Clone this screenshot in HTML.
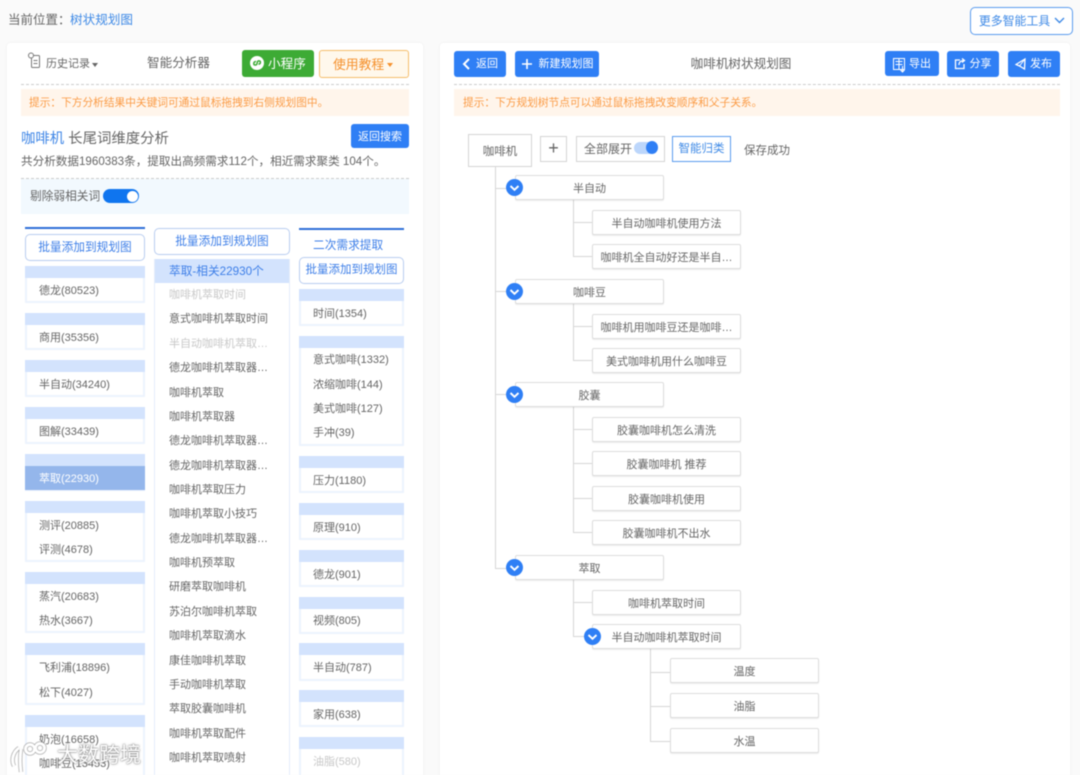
<!DOCTYPE html>
<html lang="zh"><head><meta charset="utf-8"><title>树状规划图</title>
<style>
html,body{margin:0;padding:0}
body{width:1080px;height:775px;overflow:hidden;background:#fafafa;position:relative;font-family:"Liberation Sans","Noto Sans CJK SC",sans-serif;font-size:11px;color:#666}
#w{position:absolute;left:0;top:0;width:1080px;height:775px;overflow:hidden;filter:blur(.4px)}
.a{position:absolute;box-sizing:border-box;white-space:nowrap}
.c{text-align:center}
.panel{background:#fff;border-radius:4px;box-shadow:0 0 4px rgba(0,0,0,.04)}
.dash{height:0;border-top:1px dashed #ccc}
.tip{background:#fff5eb;color:#fb9b45;line-height:29px;height:27px;font-size:10.7px}
.bb{background:#2f7ff5;color:#fff;border-radius:3px;text-align:center}
.ob{background:#fff;border:1px solid #b9cdf0;border-radius:5px;color:#3e7fe8;font-size:11.7px;text-align:center}
.line{background:#2f6fd8;height:2px}
.g{border:2px solid #edf3fd;border-top:0;background:#fff;left:25px;width:120px}
.g3{left:299px;width:105px}
.h{height:12px;background:#d3e3fd}
.i{color:#666;line-height:26px;height:24px}
.d{color:#c8c8c8}
.n{background:#fff;border:1px solid #ddd;border-radius:2px;box-shadow:0 1px 1px rgba(0,0,0,.08);text-align:center;color:#666;height:25px;line-height:26px;width:149px}
.v{background:#d6d6d6;width:1.4px}
.l{background:#d6d6d6;height:1.4px}
.o{width:17px;height:17px;border-radius:50%;background:#2f7ff5}
.o svg{position:absolute;left:0;top:0}
</style></head><body><div id="w">

<div class="a" style="left:8px;top:12px;line-height:17px;font-size:12.500px;color:#666">当前位置：</div>
<div class="a" style="left:70px;top:12px;line-height:17px;font-size:12.600px;color:#3f8ae6">树状规划图</div>
<div class="a c" style="left:970px;top:7px;width:103px;height:28px;line-height:27px;background:#fff;border:1px solid #5b9cee;border-radius:5px;color:#3f8ae6;font-size:11.900px;padding-right:14px">更多智能工具</div>
<svg class="a" style="left:1054px;top:16px" width="11" height="9"><path d="M1 2l4.500 4.500L10 2" fill="none" stroke="#3f8ae6" stroke-width="1.400"/></svg>

<!-- LEFT PANEL -->
<div class="a panel" style="left:7px;top:43px;width:416px;height:740px"></div>
<svg class="a" style="left:27px;top:52px" width="15" height="17" fill="none" stroke="#777"><rect x="4.500" y="3.500" width="8" height="12" rx="1"/><circle cx="4" cy="3.500" r="2.500" fill="#fff"/><path d="M6.500 8.500h4M6.500 11.500h4"/></svg>
<div class="a" style="left:46px;top:56px;line-height:16px">历史记录</div>
<div class="a" style="left:92px;top:63px;border:3.500px solid transparent;border-top:4px solid #666;border-bottom:0"></div>
<div class="a" style="left:147px;top:55px;line-height:17px;font-size:12.600px">智能分析器</div>
<div class="a" style="left:242px;top:50px;width:72px;height:27px;background:#3dab35;border-radius:3px;color:#fff;font-size:12.600px;line-height:28px;padding-left:26px">小程序</div>
<div class="a" style="left:250px;top:56px;width:14px;height:14px;border-radius:50%;background:#fff"></div>
<svg class="a" style="left:250px;top:56px" width="14" height="14" fill="none" stroke="#3dab35" stroke-width="1.500"><path d="M6 5.500a2 2 0 0 0-2.200 2.200c0 1.500 2.700 2 3.200 0L7.400 6c.5-1.800 3-1.300 3 .3 0 1-.7 1.800-1.900 1.900"/></svg>
<div class="a" style="left:319px;top:50px;width:90px;height:28px;background:#fff8ec;border:1px solid #f5bd6b;border-radius:3px;color:#f5912d;font-size:12.800px;line-height:27px;padding-left:13px">使用教程</div>
<div class="a" style="left:387px;top:63px;border:3.500px solid transparent;border-top:4px solid #f5912d;border-bottom:0"></div>
<div class="a dash" style="left:21px;top:84px;width:388px"></div>
<div class="a tip" style="left:21px;top:89px;width:388px;padding-left:8px">提示：下方分析结果中关键词可通过鼠标拖拽到右侧规划图中。</div>
<div class="a" style="left:21px;top:130px;line-height:18px;font-size:14.400px;color:#666"><span style="color:#3f86e6">咖啡机</span> 长尾词维度分析</div>
<div class="a bb" style="left:351px;top:124px;width:58px;height:24px;line-height:26px">返回搜索</div>
<div class="a" style="left:21px;top:152px;line-height:19px;font-size:11.600px;color:#666">共分析数据1960383条，提取出高频需求112个，相近需求聚类 104个。</div>
<div class="a dash" style="left:21px;top:178px;width:388px"></div>
<div class="a" style="left:21px;top:179px;width:388px;height:35px;background:#f2f9fe"></div>
<div class="a" style="left:30px;top:188px;line-height:18px;font-size:11.700px">剔除弱相关词</div>
<div class="a" style="left:103px;top:189px;width:36px;height:14px;border-radius:7px;background:#0f75ef"></div>
<div class="a" style="left:127px;top:191px;width:11px;height:11px;border-radius:50%;background:#fff"></div>

<!-- col 1 -->
<div class="a line" style="left:25px;top:227px;width:120px"></div>
<div class="a ob" style="left:25px;top:234px;width:120px;height:27px;line-height:26px">批量添加到规划图</div>
<div class="a h" style="left:25px;top:266px;width:120px"></div><div class="a g" style="top:278px;height:25px"></div><div class="a i" style="left:39px;top:278px">德龙(80523)</div>
<div class="a h" style="left:25px;top:313px;width:120px"></div><div class="a g" style="top:325px;height:25px"></div><div class="a i" style="left:39px;top:325px">商用(35356)</div>
<div class="a h" style="left:25px;top:360px;width:120px"></div><div class="a g" style="top:372px;height:25px"></div><div class="a i" style="left:39px;top:372px">半自动(34240)</div>
<div class="a h" style="left:25px;top:407px;width:120px"></div><div class="a g" style="top:419px;height:25px"></div><div class="a i" style="left:39px;top:419px">图解(33439)</div>
<div class="a h" style="left:25px;top:454px;width:120px"></div><div class="a" style="left:25px;top:466px;width:120px;height:25px;background:#94b6eb;border-bottom:1px solid #e9f0fd"></div><div class="a i" style="left:39px;top:466px;color:#fff">萃取(22930)</div>
<div class="a h" style="left:25px;top:501px;width:120px"></div><div class="a g" style="top:513px;height:49px"></div><div class="a i" style="left:39px;top:513px">测评(20885)</div><div class="a i" style="left:39px;top:537px">评测(4678)</div>
<div class="a h" style="left:25px;top:572px;width:120px"></div><div class="a g" style="top:584px;height:49px"></div><div class="a i" style="left:39px;top:584px">蒸汽(20683)</div><div class="a i" style="left:39px;top:608px">热水(3667)</div>
<div class="a h" style="left:25px;top:643px;width:120px"></div><div class="a g" style="top:655px;height:50px"></div><div class="a i" style="left:39px;top:655px">飞利浦(18896)</div><div class="a i" style="left:39px;top:680px">松下(4027)</div>
<div class="a h" style="left:25px;top:715px;width:120px"></div><div class="a g" style="top:727px;height:60px"></div><div class="a i" style="left:39px;top:727px">奶泡(16658)</div><div class="a i" style="left:39px;top:751px">咖啡豆(13453)</div>

<!-- col 2 -->
<div class="a ob" style="left:154px;top:228px;width:136px;height:27px;line-height:25px">批量添加到规划图</div>
<div class="a" style="left:154px;top:259px;width:136px;height:530px;background:#fff;border:1px solid #e3ecfb;border-top:0"></div>
<div class="a" style="left:155px;top:259px;width:134px;height:24px;background:#d3e3fd;color:#3e7fe8;font-size:11.700px;line-height:25px;padding-left:14px">萃取-相关22930个</div>
<div class="a i d" style="left:169px;top:282px">咖啡机萃取时间</div>
<div class="a i" style="left:169px;top:306px">意式咖啡机萃取时间</div>
<div class="a i d" style="left:169px;top:331px">半自动咖啡机萃取…</div>
<div class="a i" style="left:169px;top:355px">德龙咖啡机萃取器…</div>
<div class="a i" style="left:169px;top:380px">咖啡机萃取</div>
<div class="a i" style="left:169px;top:404px">咖啡机萃取器</div>
<div class="a i" style="left:169px;top:428px">德龙咖啡机萃取器…</div>
<div class="a i" style="left:169px;top:453px">德龙咖啡机萃取器…</div>
<div class="a i" style="left:169px;top:477px">咖啡机萃取压力</div>
<div class="a i" style="left:169px;top:501px">咖啡机萃取小技巧</div>
<div class="a i" style="left:169px;top:526px">德龙咖啡机萃取器…</div>
<div class="a i" style="left:169px;top:550px">咖啡机预萃取</div>
<div class="a i" style="left:169px;top:574px">研磨萃取咖啡机</div>
<div class="a i" style="left:169px;top:599px">苏泊尔咖啡机萃取</div>
<div class="a i" style="left:169px;top:623px">咖啡机萃取滴水</div>
<div class="a i" style="left:169px;top:648px">康佳咖啡机萃取</div>
<div class="a i" style="left:169px;top:672px">手动咖啡机萃取</div>
<div class="a i" style="left:169px;top:696px">萃取胶囊咖啡机</div>
<div class="a i" style="left:169px;top:721px">咖啡机萃取配件</div>
<div class="a i" style="left:169px;top:745px">咖啡机萃取喷射</div>

<!-- col 3 -->
<div class="a line" style="left:299px;top:228px;width:105px"></div>
<div class="a" style="left:313px;top:236px;line-height:19px;font-size:11.700px;color:#3e7fe8">二次需求提取</div>
<div class="a ob" style="left:299px;top:257px;width:105px;height:27px;line-height:25px;font-size:11.500px">批量添加到规划图</div>
<div class="a h g3" style="top:289px"></div><div class="a g g3" style="top:301px;height:25px"></div><div class="a i" style="left:313px;top:301px">时间(1354)</div>
<div class="a h g3" style="top:336px"></div><div class="a g g3" style="top:348px;height:98px"></div><div class="a i" style="left:313px;top:347px">意式咖啡(1332)</div><div class="a i" style="left:313px;top:372px">浓缩咖啡(144)</div><div class="a i" style="left:313px;top:396px">美式咖啡(127)</div><div class="a i" style="left:313px;top:420px">手冲(39)</div>
<div class="a h g3" style="top:456px"></div><div class="a g g3" style="top:468px;height:25px"></div><div class="a i" style="left:313px;top:468px">压力(1180)</div>
<div class="a h g3" style="top:503px"></div><div class="a g g3" style="top:515px;height:25px"></div><div class="a i" style="left:313px;top:515px">原理(910)</div>
<div class="a h g3" style="top:550px"></div><div class="a g g3" style="top:562px;height:25px"></div><div class="a i" style="left:313px;top:562px">德龙(901)</div>
<div class="a h g3" style="top:597px"></div><div class="a g g3" style="top:609px;height:25px"></div><div class="a i" style="left:313px;top:608px">视频(805)</div>
<div class="a h g3" style="top:643px"></div><div class="a g g3" style="top:655px;height:26px"></div><div class="a i" style="left:313px;top:655px">半自动(787)</div>
<div class="a h g3" style="top:690px"></div><div class="a g g3" style="top:702px;height:25px"></div><div class="a i" style="left:313px;top:702px">家用(638)</div>
<div class="a h g3" style="top:737px"></div><div class="a g g3" style="top:749px;height:40px"></div><div class="a i d" style="left:313px;top:749px">油脂(580)</div>

<!-- watermark -->
<svg class="a" style="left:6px;top:740px" width="48" height="35" fill="none">
<g stroke="#8a8a8a" stroke-opacity=".6" stroke-width="4.500"><path d="M13 8C7 12 5 20 8 26"/><path d="M15 9c-1 7-1 15 0 23"/><circle cx="24" cy="9" r="4.500"/><circle cx="34" cy="8" r="4.500"/></g>
<g stroke="#fff" stroke-width="2.800"><path d="M13 8C7 12 5 20 8 26"/><path d="M15 9c-1 7-1 15 0 23"/><circle cx="24" cy="9" r="4.500"/><circle cx="34" cy="8" r="4.500"/></g>
</svg>
<div class="a" style="left:57px;top:741px;font-size:21px;line-height:30px;color:#fff;text-shadow:0 0 1.500px rgba(100,100,100,.95),0 0 2.500px rgba(120,120,120,.7)">大数跨境</div>

<!-- RIGHT PANEL -->
<div class="a panel" style="left:440px;top:43px;width:630px;height:740px"></div>
<div class="a bb" style="left:454px;top:51px;width:52px;height:26px;line-height:27px;padding-left:14px">返回</div>
<svg class="a" style="left:462px;top:58px" width="9" height="12"><path d="M7 1L2 6l5 5" fill="none" stroke="#fff" stroke-width="2"/></svg>
<div class="a bb" style="left:515px;top:51px;width:84px;height:26px;line-height:27px;padding-left:12px"><span style="margin-left:6px">新建规划图</span></div>
<svg class="a" style="left:521px;top:58px" width="12" height="12"><path d="M6 1v10M1 6h10" stroke="#fff" stroke-width="1.600"/></svg>
<div class="a c" style="left:661px;top:55px;width:160px;line-height:18px;font-size:12.600px">咖啡机树状规划图</div>
<div class="a bb" style="left:885px;top:51px;width:54px;height:25px;line-height:26px;padding-left:16px">导出</div>
<svg class="a" style="left:892px;top:57px" width="15" height="16" fill="none" stroke="#fff"><rect x="1.500" y="1.500" width="11" height="11"/><path d="M7 2v10M3.500 4.500h7M3.500 7.500h7M10.500 9v6M8.500 13l2 2 2-2"/></svg>
<div class="a bb" style="left:947px;top:51px;width:52px;height:26px;line-height:27px;padding-left:15px">分享</div>
<svg class="a" style="left:954px;top:58px" width="12" height="12" fill="none" stroke="#fff" stroke-width="1.300"><path d="M6 2H1.500v8.500h8.500V6M5 7c0-3 2-4.500 5-4.500M8 .5l2.500 2L8 4.500"/></svg>
<div class="a bb" style="left:1008px;top:51px;width:52px;height:26px;line-height:27px;padding-left:14px">发布</div>
<svg class="a" style="left:1015px;top:58px" width="12" height="12"><path d="M10 1L1 6.500 4.500 8 9.500 11z" fill="none" stroke="#fff" stroke-width="1.300"/><path d="M10 1L4.500 8" stroke="#fff"/></svg>
<div class="a dash" style="left:454px;top:84px;width:606px"></div>
<div class="a tip" style="left:454px;top:89px;width:606px;padding-left:9px">提示：下方规划树节点可以通过鼠标拖拽改变顺序和父子关系。</div>

<div class="a c" style="left:468px;top:134px;width:64px;height:33px;line-height:34px;background:#fff;border:1px solid #d5d5d5;font-size:11.500px">咖啡机</div>
<div class="a c" style="left:540px;top:136px;width:27px;height:26px;line-height:22px;border:1px solid #d5d5d5;font-size:18px;color:#666">+</div>
<div class="a" style="left:576px;top:136px;width:89px;height:26px;line-height:24px;border:1px solid #d5d5d5;padding-left:7px;font-size:12px">全部展开</div>
<div class="a" style="left:634px;top:142px;width:23px;height:12px;border-radius:6px;background:#bcd6fb"></div>
<div class="a" style="left:646px;top:141px;width:12px;height:13px;border-radius:50%;background:#2f7ff5"></div>
<div class="a c" style="left:672px;top:136px;width:59px;height:26px;line-height:24px;border:1px solid #5b9cee;color:#3f8ae6;font-size:11.500px">智能归类</div>
<div class="a" style="left:744px;top:142px;line-height:18px;font-size:11.500px">保存成功</div>

<!-- lines -->
<div class="a v" style="left:495px;top:167px;height:402px"></div>
<div class="a l" style="left:495px;top:188px;width:20px"></div>
<div class="a l" style="left:495px;top:291px;width:20px"></div>
<div class="a l" style="left:495px;top:394px;width:20px"></div>
<div class="a l" style="left:495px;top:568px;width:20px"></div>
<div class="a v" style="left:573px;top:200px;height:57px"></div>
<div class="a l" style="left:573px;top:222px;width:19px"></div><div class="a l" style="left:573px;top:256px;width:19px"></div>
<div class="a v" style="left:573px;top:304px;height:57px"></div>
<div class="a l" style="left:573px;top:326px;width:19px"></div><div class="a l" style="left:573px;top:360px;width:19px"></div>
<div class="a v" style="left:573px;top:407px;height:126px"></div>
<div class="a l" style="left:573px;top:429px;width:19px"></div><div class="a l" style="left:573px;top:463px;width:19px"></div><div class="a l" style="left:573px;top:498px;width:19px"></div><div class="a l" style="left:573px;top:532px;width:19px"></div>
<div class="a v" style="left:573px;top:580px;height:57px"></div>
<div class="a l" style="left:573px;top:602px;width:19px"></div><div class="a l" style="left:573px;top:636px;width:19px"></div>
<div class="a v" style="left:650px;top:648px;height:93px"></div>
<div class="a l" style="left:650px;top:672px;width:20px"></div><div class="a l" style="left:650px;top:706px;width:20px"></div><div class="a l" style="left:650px;top:741px;width:20px"></div>

<!-- nodes -->
<div class="a n" style="left:515px;top:175px">半自动</div>
<div class="a n" style="left:592px;top:210px">半自动咖啡机使用方法</div>
<div class="a n" style="left:592px;top:244px">咖啡机全自动好还是半自…</div>
<div class="a n" style="left:515px;top:279px">咖啡豆</div>
<div class="a n" style="left:592px;top:314px">咖啡机用咖啡豆还是咖啡…</div>
<div class="a n" style="left:592px;top:348px">美式咖啡机用什么咖啡豆</div>
<div class="a n" style="left:515px;top:382px">胶囊</div>
<div class="a n" style="left:592px;top:417px">胶囊咖啡机怎么清洗</div>
<div class="a n" style="left:592px;top:451px">胶囊咖啡机 推荐</div>
<div class="a n" style="left:592px;top:486px">胶囊咖啡机使用</div>
<div class="a n" style="left:592px;top:520px">胶囊咖啡机不出水</div>
<div class="a n" style="left:515px;top:555px">萃取</div>
<div class="a n" style="left:592px;top:590px">咖啡机萃取时间</div>
<div class="a n" style="left:592px;top:624px">半自动咖啡机萃取时间</div>
<div class="a n" style="left:670px;top:658px">温度</div>
<div class="a n" style="left:670px;top:693px">油脂</div>
<div class="a n" style="left:670px;top:728px">水温</div>

<!-- toggles -->
<div class="a o" style="left:506px;top:179px"><svg width="17" height="17"><path d="M4.500 7l4 3.800 4-3.800" fill="none" stroke="#fff" stroke-width="1.900"/></svg></div>
<div class="a o" style="left:506px;top:283px"><svg width="17" height="17"><path d="M4.500 7l4 3.800 4-3.800" fill="none" stroke="#fff" stroke-width="1.900"/></svg></div>
<div class="a o" style="left:506px;top:386px"><svg width="17" height="17"><path d="M4.500 7l4 3.800 4-3.800" fill="none" stroke="#fff" stroke-width="1.900"/></svg></div>
<div class="a o" style="left:506px;top:559px"><svg width="17" height="17"><path d="M4.500 7l4 3.800 4-3.800" fill="none" stroke="#fff" stroke-width="1.900"/></svg></div>
<div class="a o" style="left:584px;top:628px"><svg width="17" height="17"><path d="M4.500 7l4 3.800 4-3.800" fill="none" stroke="#fff" stroke-width="1.900"/></svg></div>

</div></body></html>
